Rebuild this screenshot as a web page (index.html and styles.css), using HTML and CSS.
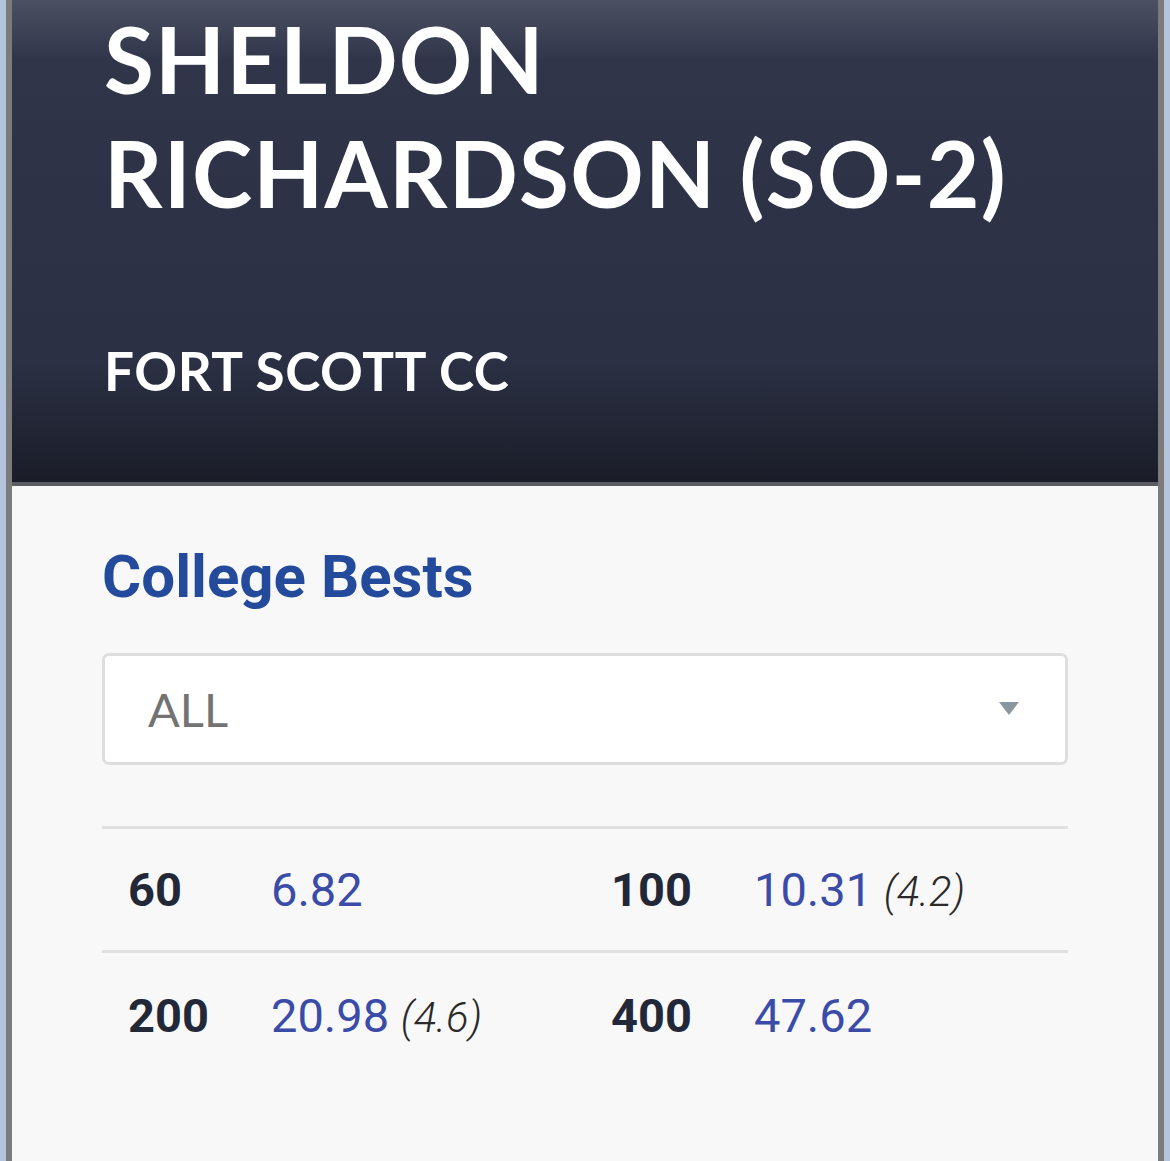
FILE: index.html
```html
<!DOCTYPE html>
<html>
<head>
<meta charset="utf-8">
<link rel="stylesheet" href="styles.css">
</head>
<body>
<div class="card">
  <header class="hero">
    <h1 class="name">SHELDON RICHARDSON (SO-2)</h1>
    <div class="school">FORT SCOTT CC</div>
  </header>
  <section class="content">
    <h2 class="section-title">College Bests</h2>
    <div class="select">
      <span class="select-value">ALL</span>
      <svg class="select-arrow" width="20" height="14" viewBox="0 0 20 14"><path d="M0 0 H20 L10 13 Z" fill="#8b979f"/></svg>
    </div>
    <div class="bests">
      <div class="row">
        <div class="cell"><span class="event">60</span><span class="mark">6.82</span></div>
        <div class="cell"><span class="event">100</span><span class="mark">10.31 <i class="wind">(4.2)</i></span></div>
      </div>
      <div class="row">
        <div class="cell"><span class="event">200</span><span class="mark">20.98 <i class="wind">(4.6)</i></span></div>
        <div class="cell"><span class="event">400</span><span class="mark">47.62</span></div>
      </div>
    </div>
  </section>
</div>
</body>
</html>
```

FILE: styles.css
```css
html, body {
  margin: 0;
  padding: 0;
}
body {
  background: #b3c4dc;
  height: 1161px;
  overflow: hidden;
}
.card {
  margin: 0 6px;
  border-left: 6px solid #7b7b7b;
  border-right: 6px solid #7b7b7b;
  background: #f8f8f8;
  height: 1161px;
}
.hero {
  height: 486px;
  box-sizing: border-box;
  border-bottom: 4px solid #5a5c64;
  background: linear-gradient(180deg, #4b5062 0px, #30354a 60px, #2d3246 200px, #2b3044 360px, #1a1d28 482px);
  padding: 2px 0 0 92px;
  color: #ffffff;
  font-family: "Lato", "Open Sans", sans-serif;
}
.name {
  margin: 0;
  font-size: 91px;
  line-height: 114px;
  font-weight: 700;
  letter-spacing: 1.2px;
  width: 1000px;
}
.school {
  margin-top: 111px;
  font-size: 53px;
  font-weight: 700;
  line-height: 60px;
  letter-spacing: 0.6px;
}
.content {
  padding: 56px 90px 0 90px;
  font-family: "Roboto", sans-serif;
}
.section-title {
  margin: 0;
  font-size: 60px;
  font-weight: 700;
  color: #244b9b;
  line-height: 70px;
}
.select {
  margin-top: 41px;
  height: 112px;
  box-sizing: border-box;
  border: 3px solid #dedede;
  border-radius: 7px;
  background: #ffffff;
  display: flex;
  align-items: center;
  justify-content: space-between;
  padding: 0 46px 0 43px;
}
.select-value {
  font-family: "Lato", "Open Sans", sans-serif;
  font-size: 47px;
  color: #737373;
}
.select-arrow {
  display: block;
}
.bests {
  margin-top: 61px;
  border-top: 3px solid #e0e0e0;
}
.row {
  display: grid;
  grid-template-columns: 1fr 1fr;
  height: 124px;
  box-sizing: border-box;
  border-bottom: 3px solid #e0e0e0;
  align-items: center;
}
.row:last-child {
  border-bottom: none;
}
.cell {
  display: flex;
  align-items: baseline;
  padding-left: 26px;
}
.event {
  width: 143px;
  font-size: 47px;
  font-weight: 700;
  color: #232838;
}
.mark {
  font-size: 47px;
  color: #3a4ca8;
}
.wind {
  font-size: 42px;
  font-weight: 300;
  color: #2a2a2a;
}
```
